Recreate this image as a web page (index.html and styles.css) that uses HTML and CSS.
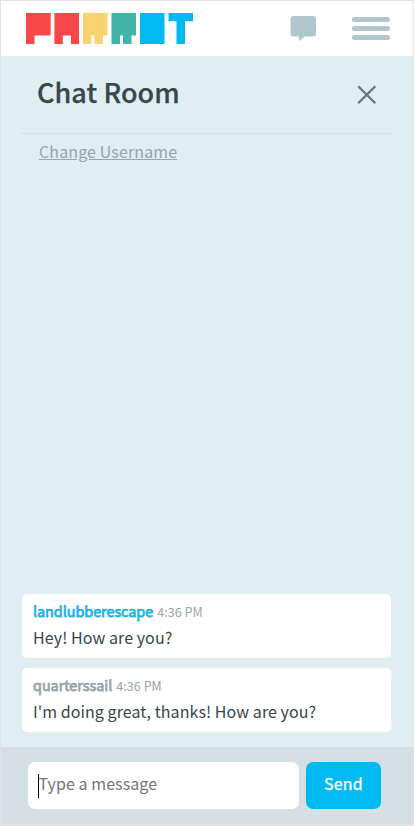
FILE: index.html
```html
<!DOCTYPE html>
<html lang="en">
<head>
<meta charset="utf-8">
<title>Chat Room</title>
<link rel="stylesheet" href="styles.css">
</head>
<body>
<div class="app">
  <header class="topbar">
    <svg class="logo" width="168" height="31" viewBox="0 0 168 31" role="img" aria-label="Parrot">
      <path fill="#f94646" d="M0 0H24.7V22.5H8.5V31H0ZM28.4 0H53V31H45V22.5H36.8V31H28.4Z"/>
      <path fill="#f9d36e" d="M57 0H81.6V22.5H77V31H68.5V22.5H65.2V31H57Z"/>
      <path fill="#42b4aa" d="M85.5 0H110V22.5H105.5V31H97V22.5H94V31H85.5Z"/>
      <path fill="#02baf2" d="M114 0H138.5V31H114ZM142.5 0H167V8.3H159V31H150.5V8.3H142.5Z"/>
    </svg>
    <svg class="chat-icon" width="27" height="26" viewBox="0 0 27 26"><path fill="#b1c6cd" d="M3.5 0H23Q26 0 26 3V17.5Q26 20.5 23 20.5H15L9 25.3V20.5H3.5Q.5 20.5 .5 17.5V3Q.5 0 3.5 0Z"/></svg>
    <div class="menu"><span></span><span></span><span></span></div>
  </header>
  <main class="room">
    <div class="heading">
      <h1>Chat Room</h1>
      <svg class="close" width="20" height="20" viewBox="0 0 20 20"><path d="M1.2 1.2 18.3 18.3M18.3 1.2 1.2 18.3" stroke="#6c757b" stroke-width="2.3"/></svg>
    </div>
    <a class="rename">Change Username</a>
    <div class="messages">
      <article class="message">
        <div class="meta"><b class="user own">landlubberescape</b><time>4:36 PM</time></div>
        <p>Hey! How are you?</p>
      </article>
      <article class="message">
        <div class="meta"><b class="user">quarterssail</b><time>4:36 PM</time></div>
        <p>I'm doing great, thanks! How are you?</p>
      </article>
    </div>
  </main>
  <footer class="composer">
    <div class="field"><i class="caret"></i><span>Type a message</span></div>
    <button class="send">Send</button>
  </footer>
</div>
</body>
</html>
```
FILE: styles.css
```css
* { box-sizing: border-box; }
body {
  margin: 0;
  font-family: "Noto Sans CJK SC", "Noto Sans", sans-serif;
  font-size: 16px;
  letter-spacing: .07px;
  color: #37474b;
}
.app {
  width: 414px;
  height: 826px;
  border: 1px solid #e2e2e2;
  border-bottom-width: 2px;
  display: flex;
  flex-direction: column;
  background: #e0edf3;
}
.topbar {
  height: 55px;
  flex: none;
  display: flex;
  align-items: flex-start;
  padding: 12px 0 0 25px;
  background: #fff;
}
.logo { display: block; }
.chat-icon { margin: 3px 0 0 96px; }
.menu { width: 38px; margin: 4px 0 0 35px; display: grid; gap: 4px; }
.menu span { height: 5px; border-radius: 2.5px; background: #b1c6cd; }
.room {
  flex: 1;
  min-height: 0;
  display: flex;
  flex-direction: column;
  padding: 0 21px 15px;
}
.heading {
  height: 78px;
  margin-left: -1px;
  padding: 0 15px 0 16px;
  flex: none;
  display: flex;
  justify-content: space-between;
  border-bottom: 1px solid #d7e0e5;
}
h1 {
  margin: 16px 0 0;
  font-size: 27px;
  line-height: 40px;
  font-weight: 500;
  letter-spacing: .08px;
  white-space: nowrap;
  -webkit-text-stroke: .25px currentColor;
}
.close { margin-top: 29px; }
.rename {
  align-self: flex-start;
  margin: 5px 0 0 17px;
  line-height: 24px;
  letter-spacing: .12px;
  color: #96a5aa;
  text-decoration: underline;
  white-space: nowrap;
}
.messages { margin-top: auto; display: grid; gap: 10px; width: 369px; }
.message { height: 64px; padding: 5px 11px; border-radius: 5px; background: #fff; }
.meta { display: flex; align-items: baseline; height: 24px; line-height: 24px; white-space: nowrap; }
.user {
  font-size: 14.4px;
  font-weight: 400;
  letter-spacing: -.04px;
  color: #96a5aa;
  margin-right: 4px;
  -webkit-text-stroke: .75px currentColor;
}
.own { color: #17b4ec; }
time { font-size: 12.5px; color: #96a5aa; }
p { margin: 2px 0 0; line-height: 24px; white-space: nowrap; }
.composer {
  height: 77px;
  flex: none;
  display: flex;
  gap: 7px;
  padding: 15px 0 0 27px;
  background: #d5e0e5;
}
.field {
  width: 271px;
  height: 47px;
  display: flex;
  align-items: center;
  padding-left: 10px;
  border-radius: 7px;
  background: #fff;
  color: #757575;
}
.field span { margin: -5px 0 0 -.5px; }
.caret { width: 1px; height: 24px; background: #000; }
.send {
  width: 75px;
  height: 47px;
  padding: 0 0 5px;
  border: 0;
  border-radius: 7px;
  background: #02baf2;
  color: #fff;
  font: 400 16px "Noto Sans CJK SC", sans-serif;
  letter-spacing: .2px;
  -webkit-text-stroke: .25px currentColor;
}
```
